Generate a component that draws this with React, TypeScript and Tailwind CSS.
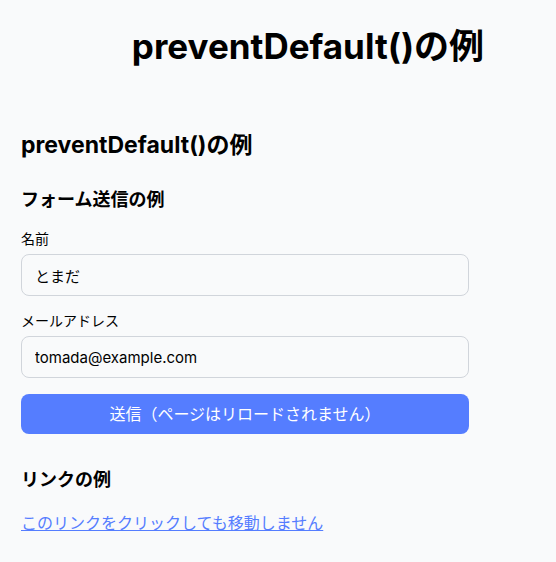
export default function App() {
  return (
    <div
      className="min-h-screen bg-[#f9fafb] text-black"
      style={{ fontFamily: 'Inter, "Noto Sans CJK JP", sans-serif' }}
    >
      <h1 className="pt-[26px] pl-[60px] text-center text-[35px] font-bold leading-[40px]">
        preventDefault()の例
      </h1>

      <div className="px-[21px] pt-[64px]">
        <h2 className="text-[23px] font-bold leading-[30px]">preventDefault()の例</h2>

        <form className="mt-[28px] max-w-md" onSubmit={(e) => e.preventDefault()}>
          <h3 className="text-[18px] font-bold leading-[24px]">フォーム送信の例</h3>

          <label className="mt-[17px] block text-[14px] leading-[20px]">名前</label>
          <input
            className="mt-[5px] block h-[42px] w-full rounded-lg border border-[#d1d5db] bg-[#f9fafb] px-[13px] text-[15px]"
            defaultValue="とまだ"
          />

          <label className="mt-[15px] block text-[14px] leading-[20px]">メールアドレス</label>
          <input
            className="mt-[5px] block h-[42px] w-full rounded-lg border border-[#d1d5db] bg-[#f9fafb] px-[13px] text-[15px]"
            defaultValue="tomada@example.com"
          />

          <button
            type="submit"
            className="mt-[16px] block h-[40px] w-full rounded-lg bg-[#557dff] text-[16px] text-white"
          >
            送信（ページはリロードされません）
          </button>
        </form>

        <h3 className="mt-[34px] text-[18px] font-bold leading-[24px]">リンクの例</h3>
        <a
          href="#"
          onClick={(e) => e.preventDefault()}
          className="mt-[20px] inline-block text-[16px] leading-[22px] text-[#557dff] underline"
        >
          このリンクをクリックしても移動しません
        </a>
      </div>
    </div>
  )
}
